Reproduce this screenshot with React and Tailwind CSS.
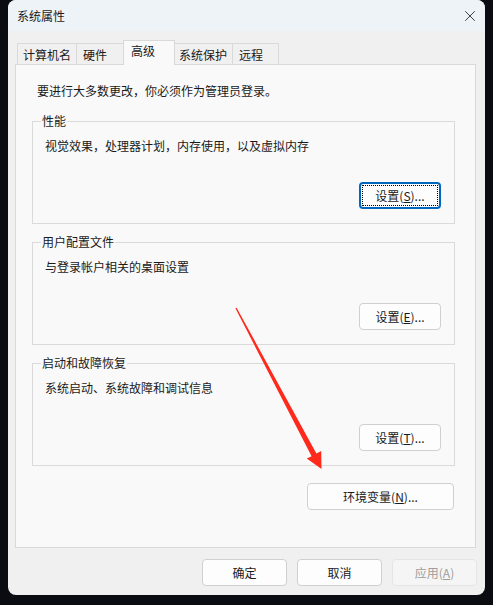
import { X } from 'lucide-react';

const font = { fontFamily: '"Noto Sans CJK SC", "Noto Sans", sans-serif' };

function Btn({ children, className = '', focused = false, disabled = false }) {
  const base = 'h-[27px] rounded-[4px] flex items-center justify-center text-[12px] leading-none';
  let look = 'border border-[#d0d0d0] bg-[#fdfdfd] text-[#1a1a1a]';
  if (focused) {
    look = 'border-2 border-[#0067c0] bg-[#fdfdfd] text-[#1a1a1a] outline-1 outline-dotted outline-black outline-offset-[-4px]';
  }
  if (disabled) {
    look = 'border border-[#e5e5e5] bg-[#f5f5f5] text-[#9d9d9d]';
  }
  return <div className={`${base} ${look} ${className}`}>{children}</div>;
}

function GroupBox({ title, desc, button, focused, className = '' }) {
  return (
    <div className={`relative ml-[16px] w-[423px] h-[103px] border border-[#dadada] ${className}`}>
      <span className="absolute left-[8px] top-[-9px] px-[1px] bg-[#f9f9f9] text-[12px] leading-[16px] text-[#1a1a1a]">
        {title}
      </span>
      <div className="flex flex-col h-full">
        <p className="ml-[12px] mt-[16px] text-[12px] leading-[16px] text-[#1a1a1a]">{desc}</p>
        <div className="mt-auto mb-[14px] mr-[13px] flex justify-end">
          <Btn className="w-[82px]" focused={focused}>
            {button}
          </Btn>
        </div>
      </div>
    </div>
  );
}

function Tab({ label, active, className = '' }) {
  if (active) {
    return (
      <div className={`relative z-10 -mb-px h-[25px] border border-b-0 border-[#d9d9d9] bg-[#f9f9f9] pt-[2px] text-[12px] leading-[16px] text-[#1a1a1a] ${className}`}>
        {label}
      </div>
    );
  }
  return (
    <div className={`h-[21px] border border-b-0 border-[#d9d9d9] bg-[#f0f0f0] pt-[3px] text-[12px] leading-[16px] text-[#1a1a1a] ${className}`}>
      {label}
    </div>
  );
}

export default function App() {
  return (
    <div className="relative w-[493px] h-[605px] bg-[#0a0c12] pl-[8px] overflow-hidden" style={font}>
      <div className="w-[477px] h-[595px] rounded-[8px] overflow-hidden bg-[#f0f0f0] flex flex-col">
        {/* title bar */}
        <div className="h-[31px] bg-[#eef3f8] flex items-center justify-between pl-[9px] pr-[6px]">
          <span className="text-[12px] text-[#1b1b1b]">系统属性</span>
          <X size={18} strokeWidth={1.1} className="text-[#1b1b1b]" />
        </div>

        {/* tabs */}
        <div className="mt-[10px] ml-[9px] h-[23px] flex items-end">
          <Tab label="计算机名" className="w-[60px] pl-[5px]" />
          <Tab label="硬件" className="w-[48px] pl-[6px] -ml-px" />
          <Tab label="高级" active className="w-[52px] pl-[7px] -ml-px" />
          <Tab label="系统保护" className="w-[59px] pl-[4px] -ml-px" />
          <Tab label="远程" className="w-[47px] pl-[6px] -ml-px" />
        </div>

        {/* tab page */}
        <div className="ml-[7px] w-[461px] h-[484px] border border-[#d9d9d9] bg-[#f9f9f9] flex flex-col">
          <p className="ml-[21px] mt-[18px] text-[12px] leading-[16px] text-[#1a1a1a]">
            要进行大多数更改，你必须作为管理员登录。
          </p>
          <GroupBox
            className="mt-[22px]"
            title="性能"
            desc="视觉效果，处理器计划，内存使用，以及虚拟内存"
            button={<>设置(<u>S</u>)...</>}
            focused
          />
          <GroupBox
            className="mt-[18px]"
            title="用户配置文件"
            desc="与登录帐户相关的桌面设置"
            button={<>设置(<u>E</u>)...</>}
          />
          <GroupBox
            className="mt-[18px]"
            title="启动和故障恢复"
            desc="系统启动、系统故障和调试信息"
            button={<>设置(<u>T</u>)...</>}
          />
          <div className="mt-[17px] ml-[16px] w-[422px] flex justify-end">
            <Btn className="w-[147px]">环境变量(<u>N</u>)...</Btn>
          </div>
        </div>

        {/* dialog buttons */}
        <div className="mt-[11px] pr-[8px] flex justify-end gap-[10px]">
          <Btn className="w-[85px]">确定</Btn>
          <Btn className="w-[85px]">取消</Btn>
          <Btn className="w-[85px]" disabled>
            应用(<u>A</u>)
          </Btn>
        </div>
      </div>

      {/* red annotation arrow */}
      <svg className="absolute inset-0 pointer-events-none" width="493" height="605" viewBox="0 0 493 605">
        <polygon
          fill="#ff2a1c"
          points="236.6,307.7 316.4,453.4 321.2,451 321.5,469 306.8,458.6 311.6,456.2 235.4,308.3"
        />
      </svg>
    </div>
  );
}
